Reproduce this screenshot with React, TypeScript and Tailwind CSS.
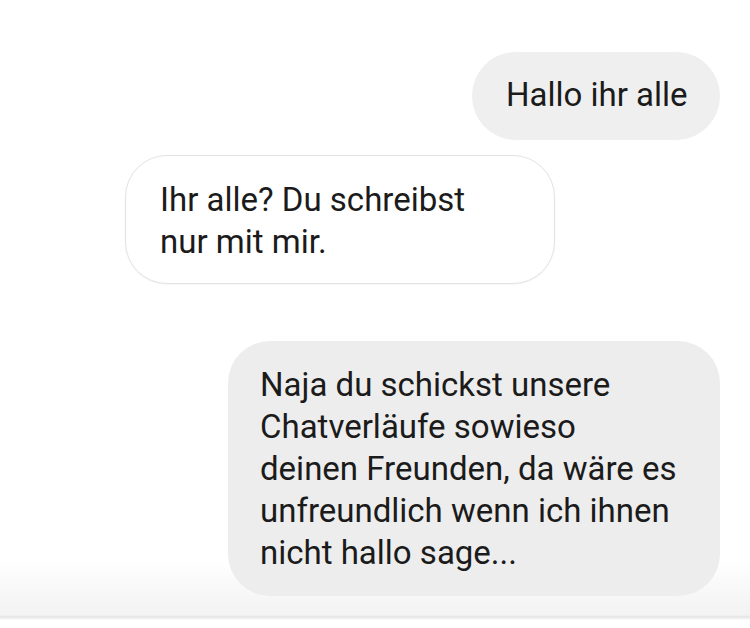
export default function App() {
  return (
    <div
      className="relative h-[628px] w-[750px] overflow-hidden bg-[linear-gradient(to_bottom,#ffffff_0px,#ffffff_560px,#f9f9f9_585px,#f3f3f3_615px,#e4e4e4_617px,#ffffff_620px,#ffffff_628px)] text-[33px] leading-[42px] text-[#1b1b1b]"
      style={{ fontFamily: 'Roboto, "Noto Sans", sans-serif' }}
    >
      <div className="flex flex-col pt-[52px]">
        {/* outgoing */}
        <div className="flex justify-end pr-[30px]">
          <div className="flex h-[88px] w-[248px] items-center rounded-full bg-[#efefef] pl-[34px] pb-[2px]">
            Hallo ihr alle
          </div>
        </div>

        {/* incoming */}
        <div className="mt-[15px] flex pl-[125px]">
          <div className="w-[430px] rounded-[42px] border border-[#e3e3e3] bg-white pl-[34px] pt-[23px] pb-[20px] shadow-[0_1px_2px_rgba(0,0,0,0.04)]">
            Ihr alle? Du schreibst
            <br />
            nur mit mir.
          </div>
        </div>

        {/* outgoing */}
        <div className="mt-[57px] flex justify-end pr-[30px]">
          <div className="w-[492px] rounded-[42px] bg-[#ededed] pl-[32px] pt-[23px] pb-[22px]">
            Naja du schickst unsere
            <br />
            Chatverläufe sowieso
            <br />
            deinen Freunden, da wäre es
            <br />
            unfreundlich wenn ich ihnen
            <br />
            nicht hallo sage...
          </div>
        </div>
      </div>
    </div>
  );
}
